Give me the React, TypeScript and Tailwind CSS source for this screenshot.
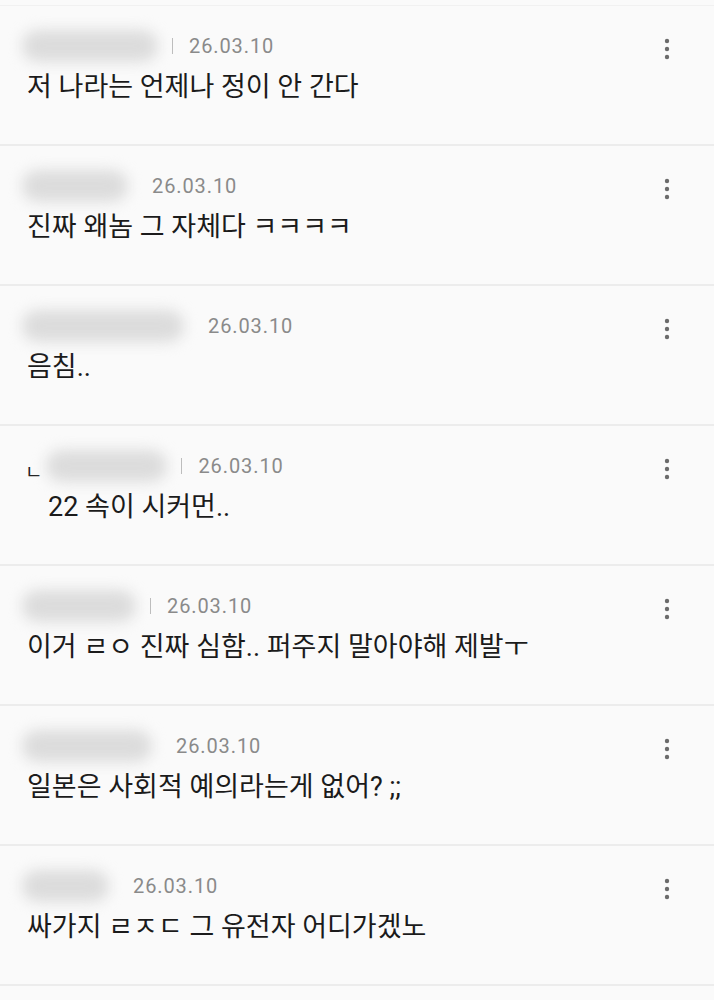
import { useMemo } from "react";

type Comment = {
  blur: number;
  bar: boolean;
  text: string;
  reply?: boolean;
};

const COMMENTS: Comment[] = [
  { blur: 136, bar: true, text: "저 나라는 언제나 정이 안 간다" },
  { blur: 106, bar: false, text: "진짜 왜놈 그 자체다 ㅋㅋㅋㅋ" },
  { blur: 162, bar: false, text: "음침.." },
  { blur: 121, bar: true, text: "22 속이 시커먼..", reply: true },
  { blur: 114, bar: true, text: "이거 ㄹㅇ 진짜 심함.. 퍼주지 말아야해 제발ㅜ" },
  { blur: 130, bar: false, text: "일본은 사회적 예의라는게 없어? ;;" },
  { blur: 87, bar: false, text: "싸가지 ㄹㅈㄷ 그 유전자 어디가겠노" },
];

function MoreIcon() {
  return (
    <svg width="6" height="22" viewBox="0 0 6 22" className="text-[#6b6b6b]">
      <circle cx="3" cy="3" r="2.2" fill="currentColor" />
      <circle cx="3" cy="11" r="2.2" fill="currentColor" />
      <circle cx="3" cy="19" r="2.2" fill="currentColor" />
    </svg>
  );
}

function BlurredName({ width }: { width: number }) {
  return (
    <div className="relative h-6" style={{ width }}>
      <div className="absolute -inset-y-1 inset-x-0 rounded-full bg-[#dcdcdc] blur-[7px]" />
    </div>
  );
}

function CommentRow({ item }: { item: Comment }) {
  return (
    <li className="flex h-[140px] border-b-2 border-[#ececec] pl-[22px] pr-[44px]">
      <div className="flex-1">
        <div className="mt-[28px] flex h-6 items-center">
          {item.reply && (
            <span className="mr-1 mt-3 pl-[3px] text-[19px] leading-none text-[#222]">ㄴ</span>
          )}
          <BlurredName width={item.blur} />
          {item.bar ? (
            <span className="ml-[14px] mr-4 h-4 w-px bg-[#bdbdbd]" />
          ) : (
            <span className="w-6" />
          )}
          <span className="text-[20px] tracking-[0.9px] text-[#8a8a8a]">26.03.10</span>
        </div>
        <p
          className={`mt-[13px] text-[27px] leading-8 text-[#1b1b1b] ${item.reply ? "pl-[26px]" : "pl-[5px]"}`}
        >
          {item.text}
        </p>
      </div>
      <div className="mt-[32px]">
        <MoreIcon />
      </div>
    </li>
  );
}

export default function App() {
  const items = useMemo(() => COMMENTS, []);
  return (
    <div
      className="min-h-[1000px] bg-[#fafafa]"
      style={{ fontFamily: "Roboto, 'Noto Sans CJK KR', sans-serif" }}
    >
      <div className="h-[6px] border-b border-[#f1f1f1]" />
      <ul>
        {items.map((c, i) => (
          <CommentRow key={i} item={c} />
        ))}
      </ul>
    </div>
  );
}
